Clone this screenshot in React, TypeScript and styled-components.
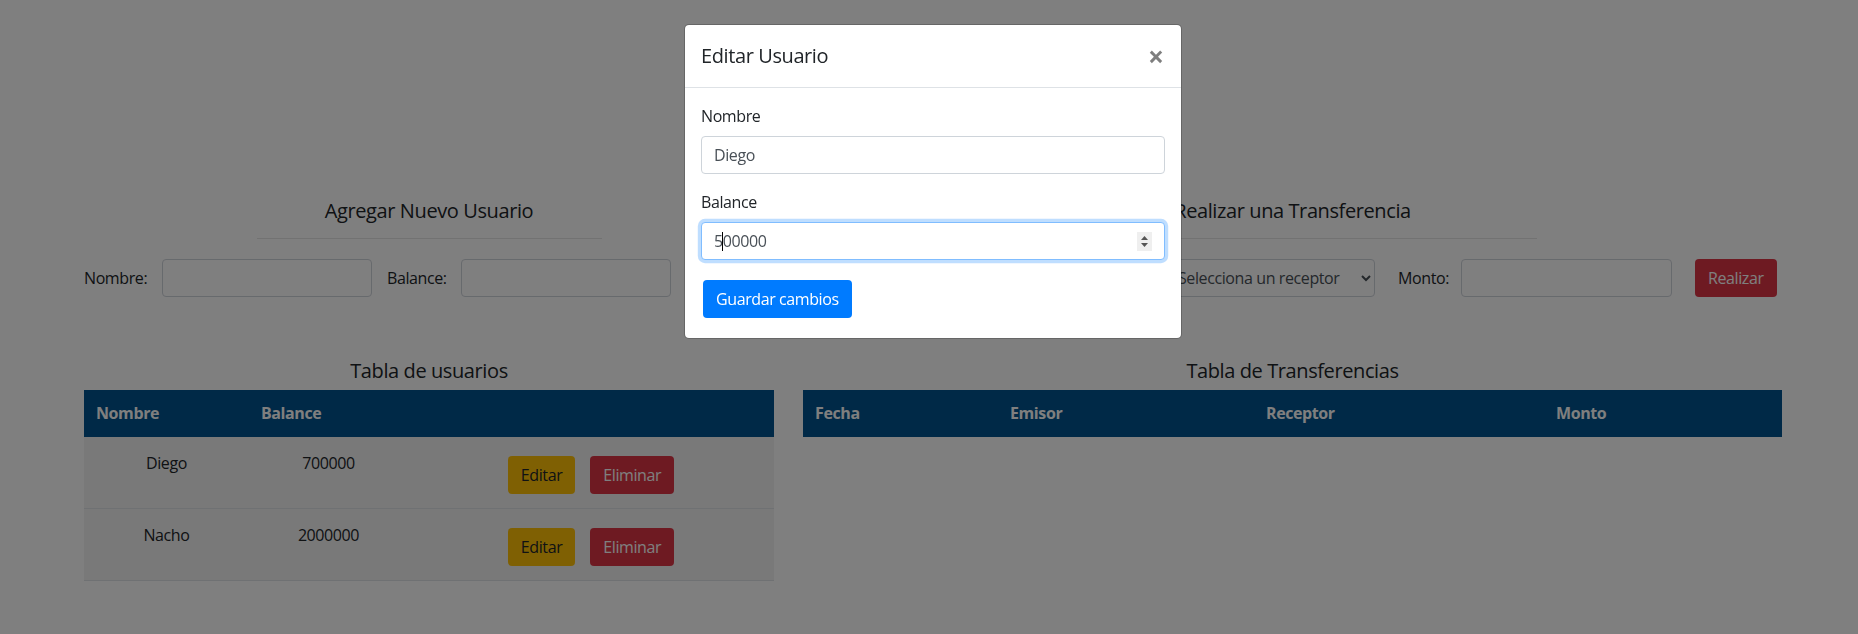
import React from "react";
import styled, { createGlobalStyle } from "styled-components";

const GlobalStyle = createGlobalStyle`
  html, body {
    margin: 0;
    padding: 0;
  }
  body {
    font-family: "Open Sans", "Noto Sans", "Liberation Sans", sans-serif;
    font-size: 16px;
    line-height: 1.5;
    letter-spacing: -0.025em;
    color: #212529;
    background: #fff;
  }
  *, *::before, *::after {
    box-sizing: border-box;
  }
`;

const Page = styled.div`
  width: 1858px;
  min-height: 634px;
  padding: 0 76px 0 84px;
`;

const Banner = styled.header`
  padding: 48px 0 103px;
  text-align: center;
`;

const BannerTitle = styled.h1`
  margin: 0;
  font-size: 40px;
  line-height: 48px;
  font-weight: 500;
`;

const Columns = styled.div<{ $mt?: number }>`
  display: grid;
  grid-template-columns: 690px 979px;
  column-gap: 29px;
  margin-top: ${(p) => p.$mt ?? 0}px;
`;

const SectionTitle = styled.h5`
  margin: 0;
  font-size: 20px;
  line-height: 24px;
  font-weight: 500;
  text-align: center;
`;

const TableCaption = styled(SectionTitle)`
  margin-bottom: 7px;
`;

const Divider = styled.hr`
  width: 50%;
  margin: 15px auto 20px;
  border: 0;
  border-top: 1px solid rgba(0, 0, 0, 0.1);
`;

const FormRow = styled.div`
  display: flex;
  align-items: center;
  height: 38px;
`;

const FieldLabel = styled.label<{ $w: number }>`
  flex: none;
  width: ${(p) => p.$w}px;
  font-size: 16px;
`;

const TextInput = styled.input<{ $w: number; $mr?: number }>`
  flex: none;
  width: ${(p) => p.$w}px;
  height: 38px;
  margin-right: ${(p) => p.$mr ?? 0}px;
  padding: 6px 12px;
  font: inherit;
  letter-spacing: inherit;
  color: #495057;
  background: #fff;
  border: 1px solid #ced4da;
  border-radius: 4px;
`;

const SelectBox = styled.select<{ $w: number; $mr?: number }>`
  flex: none;
  width: ${(p) => p.$w}px;
  height: 38px;
  margin-right: ${(p) => p.$mr ?? 0}px;
  padding: 6px 8px;
  font: inherit;
  letter-spacing: inherit;
  color: #495057;
  background: #fff;
  border: 1px solid #ced4da;
  border-radius: 4px;
`;

const Btn = styled.button<{ $variant: "primary" | "warning" | "danger" }>`
  flex: none;
  padding: 6px 12px;
  font: inherit;
  font-size: 16px;
  line-height: 24px;
  letter-spacing: inherit;
  border: 1px solid transparent;
  border-radius: 4px;
  cursor: pointer;
  color: ${(p) => (p.$variant === "warning" ? "#212529" : "#fff")};
  background: ${(p) =>
    p.$variant === "primary" ? "#007bff" : p.$variant === "warning" ? "#ffc107" : "#dc3545"};
`;

const Table = styled.table`
  width: 100%;
  border-collapse: collapse;
`;

const Th = styled.th<{ $w?: number }>`
  width: ${(p) => (p.$w ? `${p.$w}px` : "auto")};
  padding: 12px;
  line-height: 23px;
  text-align: left;
  font-weight: 700;
  color: #fff;
  background: #00528e;
`;

const Row = styled.tr`
  background: rgba(0, 0, 0, 0.05);
  border-bottom: 1px solid #dee2e6;
`;

const Td = styled.td`
  padding: 14px 12px 11px;
  line-height: 24px;
  text-align: center;
  vertical-align: top;
`;

const Actions = styled.div`
  display: flex;
  justify-content: center;
  gap: 15px;
  margin: 5px 0 3px;
`;

const Backdrop = styled.div`
  position: fixed;
  inset: 0;
  background: rgba(0, 0, 0, 0.5);
`;

const ModalLayer = styled.div`
  position: fixed;
  inset: 0;
  display: flex;
  justify-content: center;
  align-items: flex-start;
  padding: 24px 0 0 8px;
`;

const Dialog = styled.div`
  width: 498px;
  background: #fff;
  background-clip: padding-box;
  border: 1px solid rgba(0, 0, 0, 0.2);
  border-radius: 5px;
`;

const ModalHeader = styled.div`
  display: flex;
  align-items: flex-start;
  justify-content: space-between;
  padding: 16px;
  border-bottom: 1px solid #dee2e6;
`;

const ModalTitle = styled.h5`
  margin: 0;
  font-size: 20px;
  line-height: 30px;
  font-weight: 500;
`;

const CloseButton = styled.button`
  padding: 16px 17px 16px 16px;
  margin: -16px -16px -16px auto;
  background: transparent;
  border: 0;
  font-family: inherit;
  font-size: 28px;
  font-weight: 700;
  line-height: 30px;
  color: #000;
  opacity: 0.5;
  text-shadow: 0 1px 0 #fff;
  cursor: pointer;
`;

const ModalBody = styled.div`
  padding: 16px;
`;

const FormGroup = styled.div`
  margin-bottom: 16px;
`;

const ModalLabel = styled.label`
  display: block;
  margin-bottom: 8px;
`;

const InputWrap = styled.div`
  position: relative;
`;

const ModalInput = styled.input<{ $focused?: boolean }>`
  display: block;
  width: 100%;
  height: 38px;
  padding: 6px 12px;
  font: inherit;
  letter-spacing: inherit;
  color: #495057;
  background: #fff;
  border: 1px solid ${(p) => (p.$focused ? "#80bdff" : "#ced4da")};
  border-radius: 4px;
  box-shadow: ${(p) => (p.$focused ? "0 0 0 3.2px rgba(0, 123, 255, 0.25)" : "none")};
  outline: none;
`;

const Spinner = styled.svg`
  position: absolute;
  right: 13px;
  top: 10px;
  width: 15px;
  height: 19px;
`;

const Caret = styled.span`
  position: absolute;
  left: 21px;
  top: 10px;
  width: 1px;
  height: 19px;
  background: #000;
`;

const SaveButton = styled(Btn)`
  margin: 4px 2px;
`;

const users = [
  { nombre: "Diego", balance: 700000 },
  { nombre: "Nacho", balance: 2000000 },
];

const App: React.FC = () => {
  return (
    <>
      <GlobalStyle />
      <Page>
        <Banner>
          <BannerTitle>Banco Solar</BannerTitle>
        </Banner>

        <Columns>
          <section>
            <SectionTitle>Agregar Nuevo Usuario</SectionTitle>
            <Divider />
            <FormRow>
              <FieldLabel $w={78}>Nombre:</FieldLabel>
              <TextInput $w={210} $mr={15} />
              <FieldLabel $w={74}>Balance:</FieldLabel>
              <TextInput $w={210} $mr={19} />
              <Btn $variant="primary">Agregar</Btn>
            </FormRow>
          </section>
          <section>
            <SectionTitle>Realizar una Transferencia</SectionTitle>
            <Divider />
            <FormRow>
              <FieldLabel $w={80}>Emisor:</FieldLabel>
              <SelectBox $w={259} $mr={23} defaultValue="">
                <option value="">Selecciona un emisor</option>
              </SelectBox>
              <SelectBox $w={210} $mr={23} defaultValue="">
                <option value="">Selecciona un receptor</option>
              </SelectBox>
              <FieldLabel $w={63}>Monto:</FieldLabel>
              <TextInput $w={211} $mr={23} />
              <Btn $variant="danger">Realizar</Btn>
            </FormRow>
          </section>
        </Columns>

        <Columns $mt={62}>
          <section>
            <TableCaption>Tabla de usuarios</TableCaption>
            <Table>
              <thead>
                <tr>
                  <Th $w={165}>Nombre</Th>
                  <Th $w={159}>Balance</Th>
                  <Th />
                </tr>
              </thead>
              <tbody>
                {users.map((u) => (
                  <Row key={u.nombre}>
                    <Td>{u.nombre}</Td>
                    <Td>{u.balance}</Td>
                    <Td>
                      <Actions>
                        <Btn $variant="warning">Editar</Btn>
                        <Btn $variant="danger">Eliminar</Btn>
                      </Actions>
                    </Td>
                  </Row>
                ))}
              </tbody>
            </Table>
          </section>
          <section>
            <TableCaption>Tabla de Transferencias</TableCaption>
            <Table>
              <thead>
                <tr>
                  <Th $w={195}>Fecha</Th>
                  <Th $w={256}>Emisor</Th>
                  <Th $w={290}>Receptor</Th>
                  <Th>Monto</Th>
                </tr>
              </thead>
              <tbody />
            </Table>
          </section>
        </Columns>
      </Page>

      <Backdrop />
      <ModalLayer>
        <Dialog>
          <ModalHeader>
            <ModalTitle>Editar Usuario</ModalTitle>
            <CloseButton aria-label="Close">×</CloseButton>
          </ModalHeader>
          <ModalBody>
            <FormGroup>
              <ModalLabel>Nombre</ModalLabel>
              <ModalInput defaultValue="Diego" />
            </FormGroup>
            <FormGroup>
              <ModalLabel>Balance</ModalLabel>
              <InputWrap>
                <ModalInput $focused defaultValue="500000" />
                <Caret />
                <Spinner viewBox="0 0 15 19">
                  <rect width="15" height="19" fill="#efefef" />
                  <polygon points="4,8 7.5,4 11,8" fill="#555" />
                  <polygon points="4,11 11,11 7.5,15" fill="#555" />
                </Spinner>
              </InputWrap>
            </FormGroup>
            <SaveButton $variant="primary">Guardar cambios</SaveButton>
          </ModalBody>
        </Dialog>
      </ModalLayer>
    </>
  );
};

export default App;
